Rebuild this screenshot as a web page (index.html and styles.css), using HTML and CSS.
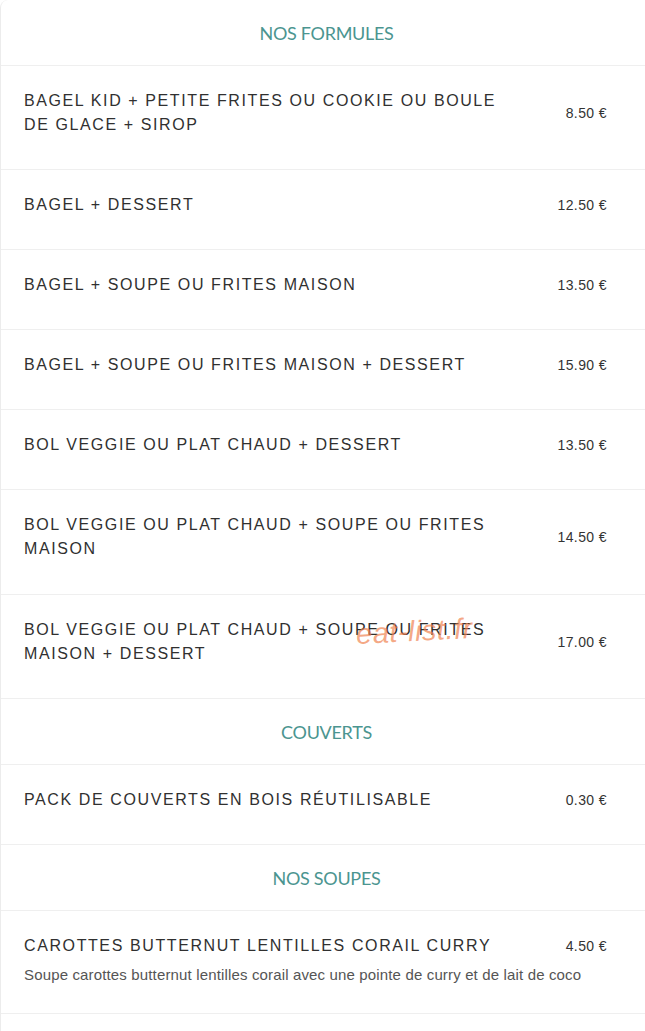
FILE: index.html
```html
<!DOCTYPE html>
<html lang="fr">
<head>
<meta charset="utf-8">
<title>Menu</title>
<link rel="stylesheet" href="styles.css">
</head>
<body>
<div class="menu">
  <div class="section-title">NOS FORMULES</div>
  <div class="item">
    <div class="head"><div class="name">BAGEL KID + PETITE FRITES OU COOKIE OU BOULE DE GLACE + SIROP</div><div class="price">8.50 €</div></div>
  </div>
  <div class="item">
    <div class="head"><div class="name">BAGEL + DESSERT</div><div class="price">12.50 €</div></div>
  </div>
  <div class="item">
    <div class="head"><div class="name">BAGEL + SOUPE OU FRITES MAISON</div><div class="price">13.50 €</div></div>
  </div>
  <div class="item">
    <div class="head"><div class="name">BAGEL + SOUPE OU FRITES MAISON + DESSERT</div><div class="price">15.90 €</div></div>
  </div>
  <div class="item">
    <div class="head"><div class="name">BOL VEGGIE OU PLAT CHAUD + DESSERT</div><div class="price">13.50 €</div></div>
  </div>
  <div class="item tall">
    <div class="head"><div class="name">BOL VEGGIE OU PLAT CHAUD + SOUPE OU FRITES MAISON</div><div class="price">14.50 €</div></div>
  </div>
  <div class="item watermarked">
    <div class="head"><div class="name">BOL VEGGIE OU PLAT CHAUD + SOUPE OU FRITES MAISON + DESSERT</div><div class="price">17.00 €</div></div>
    <span class="watermark">eat-list.fr</span>
  </div>
  <div class="section-title">COUVERTS</div>
  <div class="item">
    <div class="head"><div class="name">PACK DE COUVERTS EN BOIS RÉUTILISABLE</div><div class="price">0.30 €</div></div>
  </div>
  <div class="section-title">NOS SOUPES</div>
  <div class="item with-desc">
    <div class="head top"><div class="name">CAROTTES BUTTERNUT LENTILLES CORAIL CURRY</div><div class="price">4.50 €</div></div>
    <div class="desc">Soupe carottes butternut lentilles corail avec une pointe de curry et de lait de coco</div>
  </div>
  <div class="item">
    <div class="head"><div class="name">&nbsp;</div><div class="price"></div></div>
  </div>
</div>
</body>
</html>
```

FILE: styles.css
```css
html, body {
  margin: 0;
  padding: 0;
  background: #ffffff;
  overflow: hidden;
}
.menu {
  width: 652px;
  box-sizing: border-box;
  border-left: 1px solid #ececec;
  border-top-left-radius: 8px;
  background: #fff;
  font-family: "Liberation Sans", Arial, sans-serif;
}
.section-title {
  height: 66px;
  box-sizing: border-box;
  display: flex;
  align-items: center;
  justify-content: center;
  padding-top: 1px;
  font-family: Lato, "Open Sans", sans-serif;
  font-size: 18px;
  letter-spacing: -0.3px;
  color: #4b9590;
  border-bottom: 1px solid #efefef;
}
.item {
  position: relative;
  padding: 23px 45px 32px 23px;
  border-bottom: 1px solid #efefef;
}
.item.tall {
  padding-bottom: 33px;
}
.head {
  display: flex;
  align-items: center;
  justify-content: space-between;
  gap: 40px;
}
.head.top {
  align-items: flex-start;
}
.name {
  font-size: 16px;
  line-height: 24px;
  letter-spacing: 1.6px;
  color: #303030;
  max-width: 485px;
}
.price {
  font-size: 14px;
  line-height: 24px;
  letter-spacing: 0.4px;
  color: #333;
  white-space: nowrap;
}
.with-desc {
  padding-bottom: 28px;
}
.desc {
  margin-top: 7px;
  font-size: 15px;
  line-height: 20px;
  letter-spacing: 0.15px;
  color: #555;
}
.watermark {
  position: absolute;
  left: 355px;
  top: 20px;
  font-family: "Liberation Sans", Arial, sans-serif;
  font-style: italic;
  font-size: 29px;
  letter-spacing: 0.5px;
  color: rgba(240, 130, 80, 0.7);
  transform: rotate(-3deg);
  pointer-events: none;
}
```
